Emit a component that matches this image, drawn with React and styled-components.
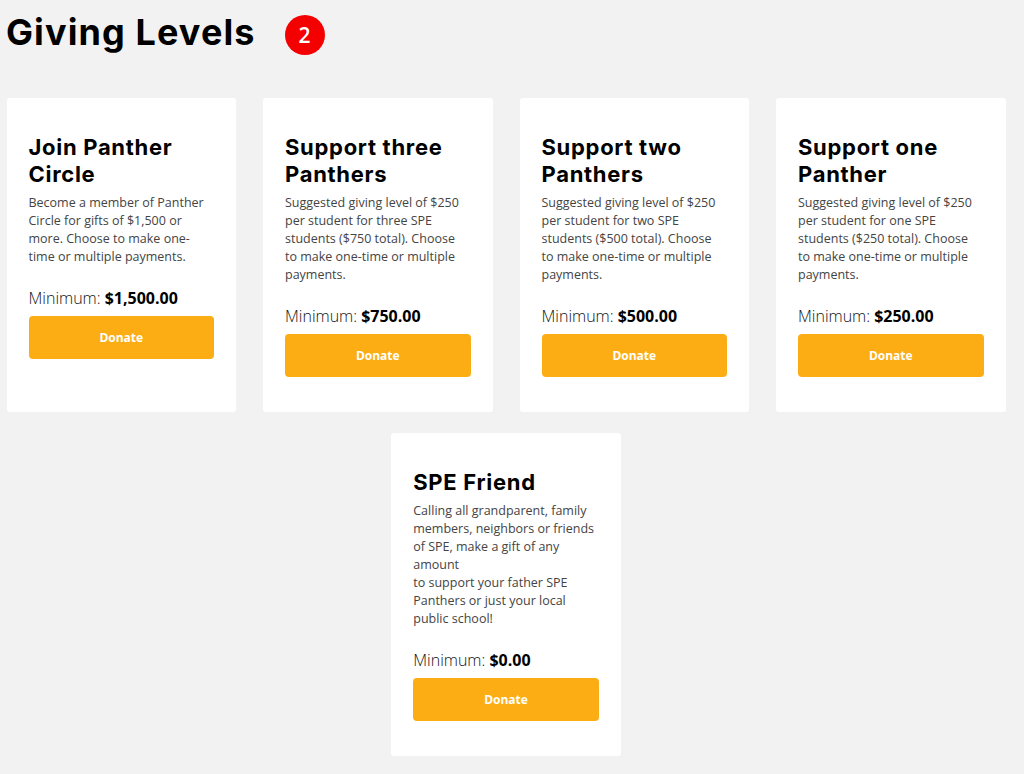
import React from 'react'
import styled, { createGlobalStyle } from 'styled-components'

const levels = [
    {
        id: 1,
        title: 'Join Panther Circle',
        text: ['Become a member of Panther Circle for gifts of $1,500 or more. Choose to make one-time or multiple payments.'],
        min: '$1,500.00',
    },
    {
        id: 2,
        title: 'Support three Panthers',
        text: ['Suggested giving level of $250 per student for three SPE students ($750 total). Choose to make one-time or multiple payments.'],
        min: '$750.00',
    },
    {
        id: 3,
        title: 'Support two Panthers',
        text: ['Suggested giving level of $250 per student for two SPE students ($500 total). Choose to make one-time or multiple payments.'],
        min: '$500.00',
    },
    {
        id: 4,
        title: 'Support one Panther',
        text: ['Suggested giving level of $250 per student for one SPE students ($250 total). Choose to make one-time or multiple payments.'],
        min: '$250.00',
    },
    {
        id: 5,
        title: 'SPE Friend',
        text: [
            'Calling all grandparent, family members, neighbors or friends of SPE, make a gift of any amount',
            'to support your father SPE Panthers or just your local public school!',
        ],
        min: '$0.00',
    },
]

function App() {
    return (
        <>
            <GlobalStyle />
            <StPage>
                <StHeader>
                    <StTitle>Giving Levels</StTitle>
                    <StBadge>2</StBadge>
                </StHeader>
                <StGrid>
                    {levels.map((level) => (
                        <StCard key={level.id}>
                            <StCard_title>{level.title}</StCard_title>
                            <StCard_text>
                                {level.text.map((line, i) => (
                                    <React.Fragment key={i}>
                                        {i > 0 && <br />}
                                        {line}
                                    </React.Fragment>
                                ))}
                            </StCard_text>
                            <StMinimum>
                                Minimum: <b>{level.min}</b>
                            </StMinimum>
                            <StDonate_button>Donate</StDonate_button>
                        </StCard>
                    ))}
                </StGrid>
            </StPage>
        </>
    )
}

export default App

const GlobalStyle = createGlobalStyle`
    body {
        margin: 0;
        background-color: #f2f2f2;
        font-family: "Open Sans", "Liberation Sans", sans-serif;
    }
`

const StPage = styled.div`
    width: 1012px;
    padding: 0 6px 20px;
    min-height: 774px;
    box-sizing: border-box;
`

const StHeader = styled.div`
    display: flex;
    align-items: center;
    gap: 29px;
    height: 70px;
`

const StTitle = styled.h1`
    margin: 0;
    font-family: Inter, "Noto Sans", sans-serif;
    font-weight: 700;
    font-size: 36px;
    letter-spacing: 1.1px;
    color: #000;
    position: relative;
    top: -3px;
`

const StBadge = styled.div`
    width: 40px;
    height: 40px;
    border-radius: 50%;
    background-color: #f40000;
    color: #fff;
    display: flex;
    align-items: center;
    justify-content: center;
    font-family: "Open Sans", sans-serif;
    font-weight: 600;
    font-size: 21px;
`

const StGrid = styled.div`
    margin-top: 28px;
    display: flex;
    flex-wrap: wrap;
    justify-content: center;
    column-gap: 27px;
    row-gap: 21px;
`

const StCard = styled.div`
    width: 229.5px;
    box-sizing: border-box;
    padding: 36px 22px 35px;
    background-color: #fff;
    border-radius: 3px;
`

const StCard_title = styled.h2`
    margin: 0;
    font-family: Inter, "Noto Sans", sans-serif;
    font-weight: 700;
    font-size: 22px;
    letter-spacing: 0.7px;
    line-height: 27px;
    color: #000;
`

const StCard_text = styled.p`
    margin: 6px 0 0;
    padding-right: 4px;
    font-size: 12.5px;
    line-height: 18px;
    color: #444;
`

const StMinimum = styled.div`
    margin-top: 20px;
    font-size: 16px;
    line-height: 24px;
    font-weight: 300;
    color: #111;

    b {
        font-weight: 700;
        color: #000;
    }
`

const StDonate_button = styled.button`
    margin-top: 6px;
    width: 100%;
    height: 43px;
    border: none;
    border-radius: 4px;
    background-color: #fdad14;
    color: #fff;
    font-family: "Open Sans", sans-serif;
    font-weight: 700;
    font-size: 12px;
    cursor: pointer;
`
